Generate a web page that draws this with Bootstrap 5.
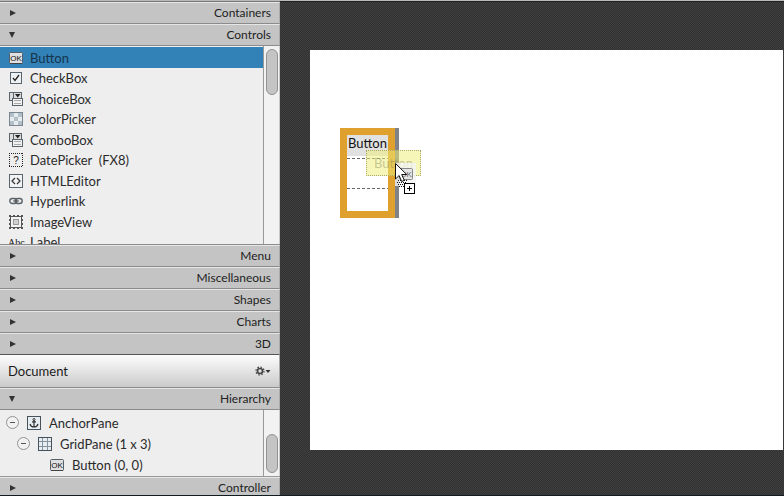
<!DOCTYPE html>
<html lang="en">
<head>
<meta charset="utf-8">
<meta name="viewport" content="width=device-width, initial-scale=1">
<title>Scene Builder</title>
<link href="https://cdn.jsdelivr.net/npm/bootstrap@5.3.0/dist/css/bootstrap.min.css" rel="stylesheet">
<style>
body{font-family:Lato,"Noto Sans",sans-serif;font-size:13px;line-height:20px;color:#2b2b2b;background:#383838}
.shell{border-top:1px solid #b9bab9;border-bottom:1px solid #101c20}
.sidebar{width:280px;background:#eee}
.topline{height:1px;background:#777}
.fold{height:22px;padding:0 8px 0 9px;border:0;border-top:1px solid #e6e6e6;border-bottom:1px solid #8b8b8b;border-right:1px solid #aaa;background:#c4c4c4;color:#222;font-size:12px;line-height:20px}
.fold svg{width:8px;height:8px;fill:#333}
.fold-end{border-bottom-color:#555}
.fold-last{height:18px;padding-top:2px;border-bottom:0}
.library{height:199px;border-bottom:1px solid #8b8b8b}
.entries{padding-top:1px}
.tree{height:67px;border-bottom:1px solid #999}
.nodes{padding-top:2px}
.rail{width:17px;border-left:1px solid #999;border-right:1px solid #c8c8c8;background:#f2f2f2;padding-left:2px}
.thumb{width:12px;border:1px solid #929292;border-radius:6px;background:#c4c4c4}
.thumb-lib{height:46px;margin-top:3px}
.thumb-tree{height:39px;margin-top:24px}
.entry{height:20px;padding-left:9px;gap:7px;color:#2b2b2b;white-space:pre;border:0;background:none;text-align:left}
.entry:nth-child(odd){height:21px}
.entry.picked{background:#3282b8;color:#16344a}
.ico{width:14px;height:14px;flex:none;overflow:visible}
.doc{height:33px;padding:0 8px;background:linear-gradient(#fdfdfd,#cacaca);border-bottom:1px solid #8b8b8b;border-right:1px solid #aaa;color:#1b1b1b}
.gear{border:0;background:none;padding:0}
.gear svg{display:block;width:16px;height:10px}
.node{height:21px;gap:8px}
.level-1{padding-left:6px}
.level-2{padding-left:17px}
.level-3{padding-left:50px}
.toggle{width:13px;height:13px;border:1px solid #929292;border-radius:50%;background:#f1f1f1;padding:0}
.toggle svg{width:11px;height:11px;display:block}
.stage{padding:48px 1px 45px 30px;border-top:1px solid #202020;background:repeating-conic-gradient(#303030 0 25%,#404040 0 50%) 0 0/2px 2px}
.paper{background:#fff}
.grid-pane{left:30px;top:78px;width:55px;height:90px;border:7px solid #e0a02e;box-shadow:4px 0 #7f8287}
.cell-button{width:41px;height:21px;border:0;padding:0 0 4px;background:#e1e1e1;color:#111;line-height:17px}
.row-line{height:1px;background:repeating-linear-gradient(90deg,#666 0 3px,#fff 3px 5px)}
.row-line-a{margin-top:2px}
.row-line-b{margin-top:29px}
.ghost{left:56px;top:100px;width:55px;height:26px;border:1px dotted #a9a96a;background:rgba(238,238,120,.52);color:rgba(130,130,90,.42);line-height:24px;padding:0 0 0 7px}
.pointer{left:85px;top:113px;width:22px;height:32px}
.glyph{font-family:"Liberation Sans",sans-serif}
</style>
<script src="https://cdn.jsdelivr.net/npm/bootstrap@5.3.0/dist/js/bootstrap.bundle.min.js"></script>
</head>
<body>
<svg class="d-none" aria-hidden="true">
<symbol id="shut" viewBox="0 0 8 8"><path d="M1 1v6l6-3z"/></symbol>
<symbol id="open" viewBox="0 0 8 8"><path d="M0 1h6L3 7z"/></symbol>
<symbol id="minus" viewBox="0 0 11 11"><path d="M3 5.500h5" stroke="#555"/></symbol>
<symbol id="ok" viewBox="0 0 14 14"><rect x=".5" y="1.500" width="13" height="11" rx="1" fill="#dfe0e1" stroke="#555f68"/><path d="M1 12.500h12" stroke="#444"/><text x="7" y="10" font-family="Liberation Sans" font-size="8" text-anchor="middle" fill="#111">OK</text></symbol>
<symbol id="choice" viewBox="0 0 14 14"><rect x=".5" y=".5" width="12" height="8" fill="#ddd" stroke="#58636b"/><path d="M4.500 .5v8" stroke="#58636b"/><path d="M6 2h5.500L8.700 5.500z" fill="#222"/><rect x="3.500" y="6.500" width="10" height="7" fill="#f2f2f2" stroke="#58636b"/><path d="M5 8.500h7M5 11.500h7" stroke="#aaa"/></symbol>
</svg>
<div class="shell d-flex vh-100 overflow-hidden">
<aside class="sidebar d-flex flex-column flex-shrink-0">
<div class="topline"></div>
<button class="fold d-flex align-items-center justify-content-between"><svg><use href="#shut"/></svg><span>Containers</span></button>
<button class="fold d-flex align-items-center justify-content-between"><svg><use href="#open"/></svg><span>Controls</span></button>
<section class="library d-flex overflow-hidden">
<div class="entries flex-grow-1 d-flex flex-column">
<button class="entry picked d-flex align-items-center flex-shrink-0"><svg class="ico"><use href="#ok"/></svg><span>Button</span></button>
<button class="entry d-flex align-items-center flex-shrink-0"><svg class="ico" viewBox="0 0 14 14"><rect x="1.500" y="1.500" width="11" height="11" fill="#eef2f4" stroke="#58646d"/><path d="m4 7 2 2.500L10 4" fill="none" stroke="#222" stroke-width="1.300"/></svg><span>CheckBox</span></button>
<button class="entry d-flex align-items-center flex-shrink-0"><svg class="ico"><use href="#choice"/></svg><span>ChoiceBox</span></button>
<button class="entry d-flex align-items-center flex-shrink-0"><svg class="ico" viewBox="0 0 14 14"><rect x=".5" y=".5" width="13" height="13" fill="#e7ecee" stroke="#7a8790"/><path d="M1 1h4v4H1zM9 1h4v4H9zM5 5h4v4H5zM1 9h4v4H1zM9 9h4v4H9z" fill="#b3c0c9"/></svg><span>ColorPicker</span></button>
<button class="entry d-flex align-items-center flex-shrink-0"><svg class="ico"><use href="#choice"/></svg><span>ComboBox</span></button>
<button class="entry d-flex align-items-center flex-shrink-0"><svg class="ico glyph" viewBox="0 0 14 14"><path d="M0 .5h14M0 13.500h14M.5 0v14M13.500 0v14" stroke="#222" stroke-dasharray="1 1"/><text x="7" y="11" font-size="10" text-anchor="middle" fill="#222">?</text></svg><span>DatePicker  (FX8)</span></button>
<button class="entry d-flex align-items-center flex-shrink-0"><svg class="ico" viewBox="0 0 14 14"><rect x=".5" y=".5" width="13" height="13" fill="#f1f3f4" stroke="#58646d"/><path d="M6 4 3 7l3 3M8 4l3 3-3 3" fill="none" stroke="#333" stroke-width="1.200"/></svg><span>HTMLEditor</span></button>
<button class="entry d-flex align-items-center flex-shrink-0"><svg class="ico" viewBox="0 0 14 14"><rect x=".8" y="4.500" width="7" height="5" rx="2.500" fill="none" stroke="#5a646c" stroke-width="1.400"/><rect x="6.200" y="4.500" width="7" height="5" rx="2.500" fill="none" stroke="#5a646c" stroke-width="1.400"/><path d="M4 7h6" stroke="#555"/></svg><span>Hyperlink</span></button>
<button class="entry d-flex align-items-center flex-shrink-0"><svg class="ico" viewBox="0 0 14 14"><rect x="1.500" y="1.500" width="11" height="11" fill="#f2f2f2" stroke="#555"/><path d="M0 .5h14M0 13.500h14M.5 0v14M13.500 0v14" stroke="#555" stroke-dasharray="2 2"/><rect x="4.500" y="4.500" width="5" height="5" fill="#ccd0d2" stroke="#999"/></svg><span>ImageView</span></button>
<button class="entry d-flex align-items-center flex-shrink-0"><svg class="ico" viewBox="0 0 14 14"><text x="-1" y="11" font-family="Liberation Serif" font-size="10" fill="#111">Abc</text></svg><span>Label</span></button>
</div>
<div class="rail"><div class="thumb thumb-lib"></div></div>
</section>
<button class="fold d-flex align-items-center justify-content-between"><svg><use href="#shut"/></svg><span>Menu</span></button>
<button class="fold d-flex align-items-center justify-content-between"><svg><use href="#shut"/></svg><span>Miscellaneous</span></button>
<button class="fold d-flex align-items-center justify-content-between"><svg><use href="#shut"/></svg><span>Shapes</span></button>
<button class="fold d-flex align-items-center justify-content-between"><svg><use href="#shut"/></svg><span>Charts</span></button>
<button class="fold fold-end d-flex align-items-center justify-content-between"><svg><use href="#shut"/></svg><span>3D</span></button>
<div class="doc d-flex align-items-center justify-content-between"><span>Document</span>
<button class="gear" aria-label="Document menu"><svg viewBox="0 0 16 10"><circle cx="5" cy="5" r="2.500" fill="none" stroke="#444" stroke-width="1.600"/><circle cx="5" cy="5" r="4" fill="none" stroke="#444" stroke-width="1.200" stroke-dasharray="1.570 1.570"/><path d="M10.500 4h5L13 7z" fill="#333"/></svg></button></div>
<button class="fold d-flex align-items-center justify-content-between"><svg><use href="#open"/></svg><span>Hierarchy</span></button>
<section class="tree d-flex overflow-hidden">
<div class="nodes flex-grow-1">
<div class="node level-1 d-flex align-items-center"><button class="toggle" aria-label="Collapse AnchorPane"><svg><use href="#minus"/></svg></button><svg class="ico" viewBox="0 0 14 14"><rect x=".5" y=".5" width="13" height="13" fill="#e7edf0" stroke="#46525b"/><circle cx="7" cy="3.500" r="1" fill="none" stroke="#333"/><path d="M7 4.500V11M5 5.800h4M3 8c.5 2 2 3 4 3s3.500-1 4-3" fill="none" stroke="#333" stroke-width="1.200"/></svg><span>AnchorPane</span></div>
<div class="node level-2 d-flex align-items-center"><button class="toggle" aria-label="Collapse GridPane"><svg><use href="#minus"/></svg></button><svg class="ico" viewBox="0 0 14 14"><rect x=".5" y=".5" width="13" height="13" fill="#e7edf0" stroke="#46525b"/><path d="M4.500 1v12M9.500 1v12M1 4.500h12M1 9.500h12" stroke="#84939e"/></svg><span>GridPane (1 x 3)</span></div>
<div class="node level-3 d-flex align-items-center"><svg class="ico"><use href="#ok"/></svg><span>Button (0, 0)</span></div>
</div>
<div class="rail"><div class="thumb thumb-tree"></div></div>
</section>
<button class="fold fold-last d-flex align-items-center justify-content-between"><svg><use href="#shut"/></svg><span>Controller</span></button>
</aside>
<main class="stage flex-grow-1">
<div class="paper h-100 position-relative">
<div class="grid-pane position-absolute"><button class="cell-button d-block">Button</button><div class="row-line row-line-a"></div><div class="row-line row-line-b"></div></div>
<div class="ghost position-absolute">Button</div>
<svg class="pointer position-absolute" viewBox="0 0 22 32"><rect x="0" y="0" width="21" height="23" fill="#f4f4f4" opacity=".8"/><rect x="4.500" y="5.500" width="13" height="11" rx="1" fill="#e5e5e5" stroke="#888"/><text x="11" y="14" font-family="Liberation Sans" font-size="8" text-anchor="middle" fill="#666">OK</text><path d="M3 17.500h10M2 19.500h9M3 21.500h8M4 23.500h6" stroke="#111" stroke-dasharray="1 1"/><path d="M.5.5v15.500l3.600-3.500 2.600 6 2.600-1.200-2.600-5.800h5z" fill="#fff" stroke="#111"/><rect x="9.500" y="20.500" width="10" height="10" fill="#fff" stroke="#000"/><path d="M14.500 23v5M12 25.500h5" stroke="#000"/></svg>
</div>
</main>
</div>
</body>
</html>
